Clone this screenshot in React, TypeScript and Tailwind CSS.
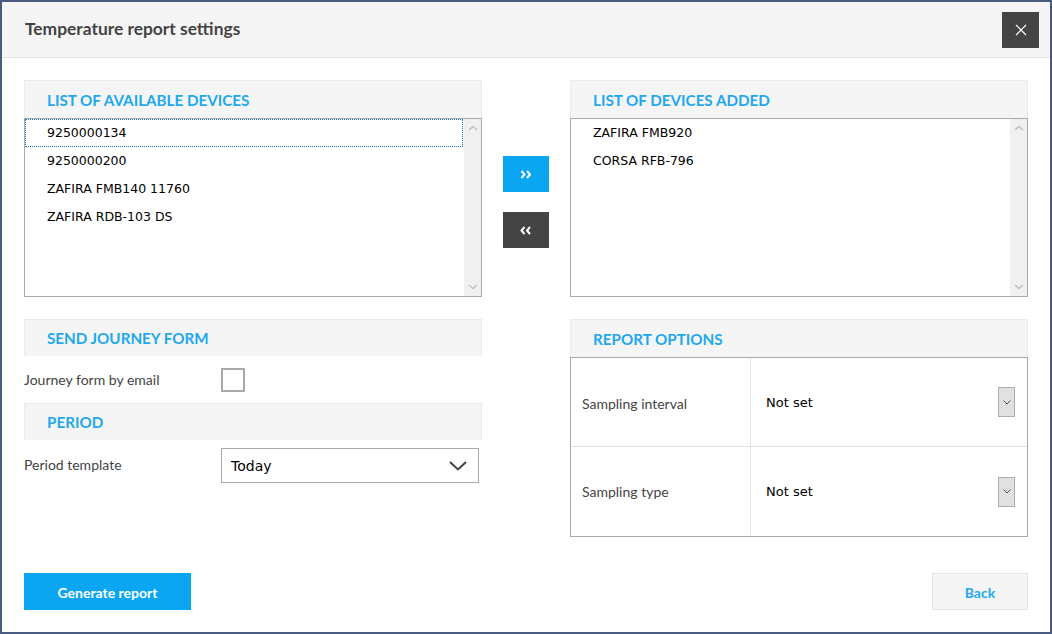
import React from "react";

const lato = { fontFamily: "Lato, 'Open Sans', sans-serif" };
const tahoma = { fontFamily: "'DejaVu Sans', Verdana, sans-serif" };

function Chevron({ dir, className }: { dir: "up" | "down"; className?: string }) {
  return (
    <svg width="10" height="6" viewBox="0 0 10 6" className={className}>
      {dir === "up" ? (
        <path d="M1 5 L5 1.5 L9 5" fill="none" stroke="#c2c2c2" strokeWidth="1.6" />
      ) : (
        <path d="M1 1 L5 4.5 L9 1" fill="none" stroke="#c2c2c2" strokeWidth="1.6" />
      )}
    </svg>
  );
}

function ListBox({ items, focusFirst }: { items: string[]; focusFirst?: boolean }) {
  return (
    <div className="flex h-[179px] border border-[#ababab] bg-white">
      <div className="flex-1 flex flex-col">
        {items.map((it, i) => (
          <div
            key={it}
            className={
              "h-[28px] flex items-center pl-[21px] text-[12.5px] text-black " +
              (i === 0 && focusFirst ? "border border-dotted border-[#1e6fd0] mr-px" : "border border-transparent")
            }
            style={tahoma}
          >
            {it}
          </div>
        ))}
      </div>
      <div className="w-[17px] bg-[#f0f0f0] flex flex-col justify-between items-center py-[6px]">
        <Chevron dir="up" />
        <Chevron dir="down" />
      </div>
    </div>
  );
}

function SectionHeader({ title, h = "h-[38px]" }: { title: string; h?: string }) {
  return (
    <div
      className={"bg-[#f5f5f5] border border-[#ebebeb] border-b-0 flex items-center pl-[22px] " + h}
    >
      <span className="text-[15.2px] font-bold text-[#1fa8ee] uppercase pt-px" style={lato}>
        {title}
      </span>
    </div>
  );
}

function SmallSelect() {
  return (
    <div className="flex items-center h-full pl-[15px] pr-[12px]">
      <span className="flex-1 text-[13px] text-black pt-px" style={tahoma}>
        Not set
      </span>
      <div className="w-[17px] h-[30px] bg-[#e1e1e1] border border-[#adadad] flex items-center justify-center">
        <svg width="8" height="5" viewBox="0 0 8 5">
          <path d="M0.5 0.5 L4 4 L7.5 0.5" fill="none" stroke="#555" strokeWidth="1" />
        </svg>
      </div>
    </div>
  );
}

export default function App() {
  return (
    <div className="w-[1052px] h-[634px] border-2 border-[#4b5a80] bg-white flex flex-col" style={lato}>
      {/* Header */}
      <div className="h-[56px] bg-[#f5f5f5] border-b border-[#e3e3e3] flex items-center justify-between pl-[23px] pr-[11px]">
        <h1 className="text-[17.4px] font-bold text-[#444]" style={lato}>
          Temperature report settings
        </h1>
        <button className="w-[37px] h-[36px] bg-[#444] flex items-center justify-center">
          <svg width="12" height="12" viewBox="0 0 12 12">
            <path d="M1 1 L11 11 M11 1 L1 11" stroke="#fff" strokeWidth="1.2" fill="none" />
          </svg>
        </button>
      </div>

      {/* Body */}
      <div className="flex-1 flex flex-col px-[22px] pt-[22px]">
        {/* Lists row */}
        <div className="flex gap-[21px]">
          <div className="w-[458px] flex flex-col">
            <SectionHeader title="List of available devices" />
            <ListBox
              items={["9250000134", "9250000200", "ZAFIRA FMB140 11760", "ZAFIRA RDB-103 DS"]}
              focusFirst
            />
          </div>
          <div className="w-[46px] flex flex-col gap-[20px] pt-[76px]">
            <button className="h-[36px] bg-[#0aa6f1] flex items-center justify-center">
              <svg width="12" height="9" viewBox="0 0 12 9">
                <path d="M1.5 1 L4.5 4.5 L1.5 8 M7 1 L10 4.5 L7 8" fill="none" stroke="#fff" strokeWidth="2" />
              </svg>
            </button>
            <button className="h-[36px] bg-[#444] flex items-center justify-center">
              <svg width="12" height="9" viewBox="0 0 12 9">
                <path d="M4.5 1 L1.5 4.5 L4.5 8 M10 1 L7 4.5 L10 8" fill="none" stroke="#fff" strokeWidth="2" />
              </svg>
            </button>
          </div>
          <div className="w-[458px] flex flex-col">
            <SectionHeader title="List of devices added" />
            <ListBox items={["ZAFIRA FMB920", "CORSA RFB-796"]} />
          </div>
        </div>

        {/* Options row */}
        <div className="flex gap-[88px] mt-[22px]">
          <div className="w-[458px] flex flex-col">
            <SectionHeader title="Send journey form" h="h-[37px]" />
            <div className="h-[47px] flex items-center">
              <span className="w-[197px] text-[14px] text-[#444]" style={lato}>
                Journey form by email
              </span>
              <div className="w-[24px] h-[24px] border-2 border-[#aaa] bg-white" />
            </div>
            <SectionHeader title="Period" h="h-[37px]" />
            <div className="h-[49px] flex items-center">
              <span className="w-[197px] text-[14px] text-[#444]" style={lato}>
                Period template
              </span>
              <div className="w-[258px] h-[35px] mt-[2px] border border-[#a9a9a9] bg-white flex items-center pl-[9px] pr-[11px]">
                <span className="flex-1 text-[14px] text-black pt-[2px]" style={tahoma}>
                  Today
                </span>
                <svg width="18" height="10" viewBox="0 0 18 10">
                  <path d="M1 1 L9 8.5 L17 1" fill="none" stroke="#444" strokeWidth="2" />
                </svg>
              </div>
            </div>
          </div>
          <div className="w-[458px] flex flex-col">
            <SectionHeader title="Report options" />
            <div className="border border-[#a9a9a9] grid grid-cols-[180px_1fr] grid-rows-[89px_89px] bg-white">
              <div className="border-r border-b border-[#e3e3e3] flex items-center pl-[11px] pt-[2px] text-[14px] text-[#444]" style={lato}>
                Sampling interval
              </div>
              <div className="border-b border-[#e3e3e3]">
                <SmallSelect />
              </div>
              <div className="border-r border-[#e3e3e3] flex items-center pl-[11px] text-[14px] text-[#444]" style={lato}>
                Sampling type
              </div>
              <div>
                <SmallSelect />
              </div>
            </div>
          </div>
        </div>

        {/* Footer */}
        <div className="mt-auto mb-[22px] flex justify-between items-center">
          <button className="w-[167px] h-[37px] bg-[#0aa6f1] text-white text-[14px] font-bold pt-px" style={lato}>
            Generate report
          </button>
          <button className="w-[96px] h-[37px] bg-[#f5f5f5] border border-[#e6e6e6] text-[#1fa8ee] text-[14px] font-bold pt-px" style={lato}>
            Back
          </button>
        </div>
      </div>
    </div>
  );
}
